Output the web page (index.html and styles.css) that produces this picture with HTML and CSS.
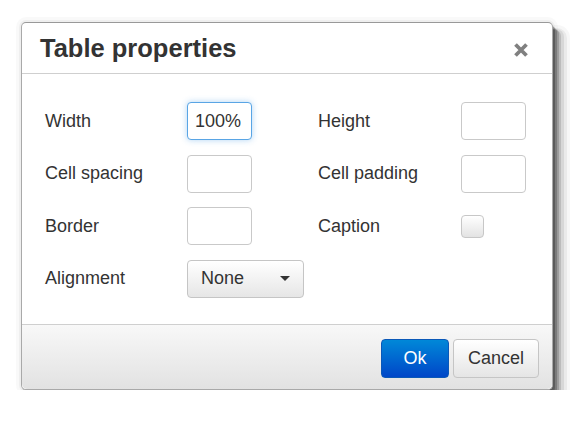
FILE: index.html
```html
<!DOCTYPE html>
<html>
<head>
<meta charset="utf-8">
<link rel="stylesheet" href="styles.css">
</head>
<body>
<div class="dialog">
  <div class="head">
    <div class="title">Table properties</div>
    <button class="close" aria-label="Close">
      <svg width="16" height="16" viewBox="0 0 16 16"><path d="M2.5 2.5 L13.5 13.5 M13.5 2.5 L2.5 13.5" stroke="#808080" stroke-width="3.8" stroke-linecap="butt"/></svg>
    </button>
  </div>
  <div class="body">
    <label class="lbl">Width</label>
    <div class="inp focus">100%</div>
    <label class="lbl r">Height</label>
    <div class="inp"></div>

    <label class="lbl">Cell spacing</label>
    <div class="inp"></div>
    <label class="lbl r">Cell padding</label>
    <div class="inp"></div>

    <label class="lbl">Border</label>
    <div class="inp"></div>
    <label class="lbl r">Caption</label>
    <div class="chk-wrap"><div class="chk"></div></div>

    <label class="lbl">Alignment</label>
    <div class="select"><span>None</span><i class="caret"></i></div>
  </div>
  <div class="foot">
    <button class="btn primary">Ok</button>
    <button class="btn">Cancel</button>
  </div>
</div>
</body>
</html>
```

FILE: styles.css
```css
html, body {
  margin: 0;
  padding: 0;
  background: #fff;
}
body {
  font-family: "Liberation Sans", Arial, sans-serif;
  color: #333;
  padding: 22px 0 0 21px;
}
.dialog {
  width: 532px;
  height: 368px;
  box-sizing: border-box;
  border: 1px solid #a9a9a9;
  border-top-color: #999;
  border-radius: 5px;
  background: #fff;
  display: flex;
  flex-direction: column;
  box-shadow:
    2px 3px 0 0 rgba(0,0,0,0.22),
    4px 5px 0 0 rgba(0,0,0,0.2),
    6px 7px 0 0 rgba(0,0,0,0.16),
    7px 9px 0 1px rgba(0,0,0,0.12),
    8px 10px 0 3px rgba(0,0,0,0.08),
    9px 11px 0 5px rgba(0,0,0,0.05),
    9px 11px 0 8px rgba(0,0,0,0.03),
    0 0 0 2px rgba(0,0,0,0.04),
    0 0 0 5px rgba(0,0,0,0.025);
}
.head {
  border-bottom: 1px solid #cfcfcf;
  display: flex;
  align-items: center;
  justify-content: space-between;
  padding: 2px 23px 0 18px;
  box-sizing: border-box;
  height: 51px;
  flex: none;
}
.title {
  font-size: 25.5px;
  font-weight: bold;
  color: #333;
  line-height: 1;
}
.close {
  border: 0;
  background: none;
  padding: 0;
  width: 16px;
  height: 16px;
  display: flex;
  margin-top: 1px;
}
.body {
  flex: 1;
  display: grid;
  grid-template-columns: 142px 65px 209px 65px;
  grid-auto-rows: 38px;
  row-gap: 14.5px;
  align-items: center;
  padding: 28px 0 0 23px;
}
.lbl {
  font-size: 18px;
  color: #333;
}
.lbl.r {
  padding-left: 66px;
}
.inp {
  box-sizing: border-box;
  height: 38px;
  border: 1px solid #c9c9c9;
  border-radius: 4px;
  background: #fff;
  font-size: 18px;
  line-height: 36px;
  padding-left: 7px;
  color: #333;
}
.inp.focus {
  border-color: #59a5e5;
  box-shadow: 0 0 6px rgba(80,160,230,0.45);
}
.chk-wrap {
  height: 38px;
  display: flex;
  align-items: center;
}
.chk {
  width: 23px;
  height: 23px;
  box-sizing: border-box;
  border: 1px solid #c7c7c7;
  border-radius: 4px;
  background: linear-gradient(#fff, #e3e3e3);
}
.select {
  width: 117px;
  height: 38px;
  box-sizing: border-box;
  border: 1px solid #c5c5c5;
  border-radius: 4px;
  background: linear-gradient(#fff, #e6e6e6);
  display: flex;
  align-items: center;
  justify-content: space-between;
  padding: 0 13px 0 13px;
  font-size: 18px;
  color: #333;
}
.caret {
  width: 0;
  height: 0;
  border-left: 5px solid transparent;
  border-right: 5px solid transparent;
  border-top: 5px solid #333;
}
.foot {
  height: 65px;
  flex: none;
  border-top: 1px solid #cfcfcf;
  background: linear-gradient(#f8f8f8, #e2e2e2);
  border-radius: 0 0 5px 5px;
  display: flex;
  align-items: center;
  justify-content: flex-end;
  gap: 4px;
  padding-right: 13px;
  padding-top: 2px;
  box-sizing: border-box;
}
.btn {
  font-family: "Liberation Sans", Arial, sans-serif;
  font-size: 18px;
  height: 39px;
  box-sizing: border-box;
  border: 1px solid #c5c5c5;
  border-radius: 4px;
  background: linear-gradient(#fff, #e5e5e5);
  color: #333;
  padding: 0 13px;
  min-width: 86px;
}
.btn.primary {
  min-width: 68px;
  width: 68px;
  background: linear-gradient(#0088d8, #0046c8);
  border-color: #0a58b8;
  color: #fff;
}
```
